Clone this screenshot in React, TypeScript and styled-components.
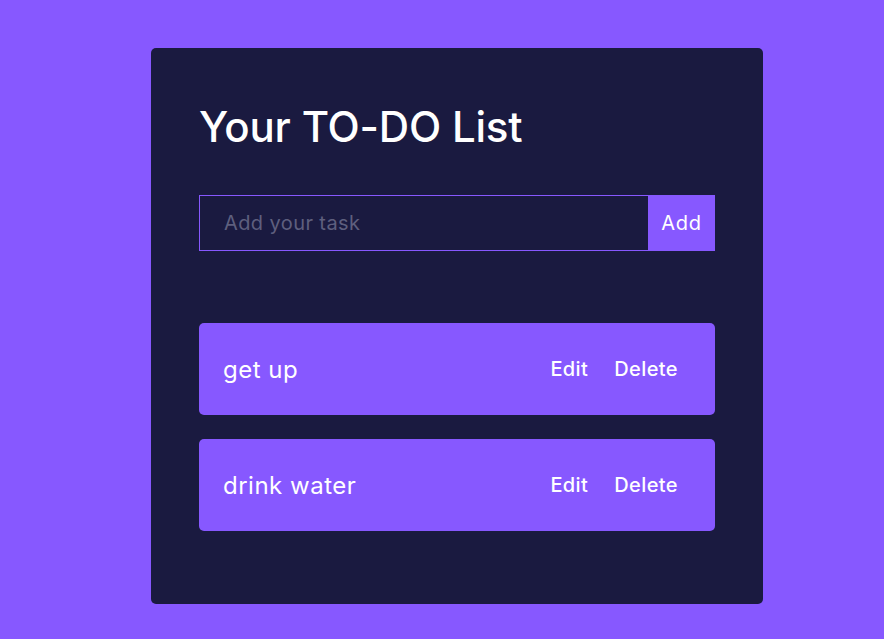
import React, { FC, useState } from 'react'
import styled, { createGlobalStyle } from 'styled-components'

const GlobalStyle = createGlobalStyle`
    html, body {
        margin: 0;
        padding: 0;
        background: #8758ff;
        font-family: Inter, "Open Sans", sans-serif;
    }
`

type Todo = { id: number; task: string }

const App: FC = () => {
    const [todos] = useState<Todo[]>([
        { id: 1, task: 'get up' },
        { id: 2, task: 'drink water' },
    ])
    return (
        <>
            <GlobalStyle />
            <Page>
                <Wrapper>
                    <Title>Your TO-DO List</Title>
                    <Form onSubmit={(e) => e.preventDefault()}>
                        <TaskInput type="text" placeholder="Add your task" />
                        <AddButton type="submit">Add</AddButton>
                    </Form>
                    <List>
                        {todos.map((todo) => (
                            <Item key={todo.id}>
                                <TaskText>{todo.task}</TaskText>
                                <Actions>
                                    <Action>Edit</Action>
                                    <Action>Delete</Action>
                                </Actions>
                            </Item>
                        ))}
                    </List>
                </Wrapper>
            </Page>
        </>
    )
}

const Page = styled.div`
    min-height: 639px;
    padding: 48px 0 0 151px;
    box-sizing: border-box;
`
const Wrapper = styled.div`
    width: 612px;
    box-sizing: border-box;
    background: #1a1a40;
    border-radius: 5px;
    padding: 48px 48px 48px;
`
const Title = styled.h1`
    margin: 0 0 37px;
    color: #fff;
    font-size: 42px;
    font-weight: 500;
    line-height: 62px;
    letter-spacing: -0.2px;
`
const Form = styled.form`
    display: flex;
    width: 100%;
    margin-bottom: 72px;
`
const TaskInput = styled.input`
    flex: 1;
    height: 56px;
    box-sizing: border-box;
    background: none;
    border: 1px solid #8758ff;
    border-right: none;
    padding: 0 24px;
    color: #fff;
    font-family: inherit;
    font-size: 20px;
    letter-spacing: 0.4px;
    outline: none;
    &::placeholder {
        color: #5e5f7e;
    }
`
const AddButton = styled.button`
    width: 67px;
    height: 56px;
    background: #8758ff;
    color: #fff;
    border: none;
    font-family: inherit;
    font-size: 20px;
    letter-spacing: 0.8px;
    padding: 0;
    cursor: pointer;
`
const List = styled.div`
    display: flex;
    flex-direction: column;
    gap: 24px;
    padding-bottom: 25px;
`
const Item = styled.div`
    display: flex;
    justify-content: space-between;
    align-items: center;
    height: 92px;
    box-sizing: border-box;
    background: #8758ff;
    border-radius: 5px;
    padding: 0 37px 0 24px;
    color: #fff;
`
const TaskText = styled.p`
    margin: 0;
    font-size: 24px;
    letter-spacing: 0.5px;
`
const Actions = styled.div`
    display: flex;
    gap: 26px;
`
const Action = styled.span`
    font-size: 20px;
    font-weight: 500;
    letter-spacing: 0.4px;
    cursor: pointer;
`

export default App
